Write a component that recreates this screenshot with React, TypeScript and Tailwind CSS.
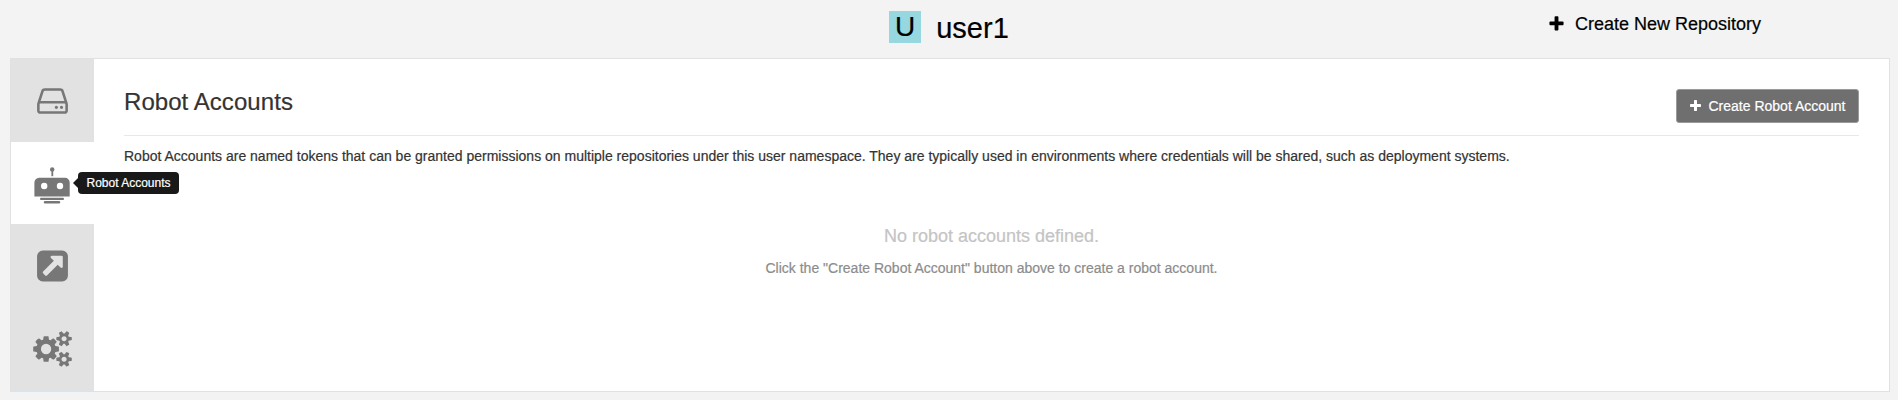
import type { ReactNode } from "react";

type GlyphProps = { width: number; className: string; d: string };

// Glyphs use font coordinates (y up, 1792 units per em).
function Glyph({ width, className, d }: GlyphProps) {
  return (
    <svg viewBox={`0 0 ${width} 1792`} className={className} fill="currentColor" aria-hidden="true">
      <path transform="translate(0 1536) scale(1 -1)" d={d} />
    </svg>
  );
}

const PLUS =
  "M1408 800v-192q0 -40 -28 -68t-68 -28h-416v-416q0 -40 -28 -68t-68 -28h-192q-40 0 -68 28t-28 68v416h-416q-40 0 -68 28t-28 68v192q0 40 28 68t68 28h416v416q0 40 28 68t68 28h192q40 0 68 -28t28 -68v-416h416q40 0 68 -28t28 -68z";
const DRIVE =
  "M1040 320q0 -33 -23.5 -56.5t-56.5 -23.5t-56.5 23.5t-23.5 56.5t23.5 56.5t56.5 23.5t56.5 -23.5t23.5 -56.5zM1296 320q0 -33 -23.5 -56.5t-56.5 -23.5t-56.5 23.5t-23.5 56.5t23.5 56.5t56.5 23.5t56.5 -23.5t23.5 -56.5zM1408 160v320q0 13 -9.5 22.5t-22.5 9.5h-1216q-13 0 -22.5 -9.5t-9.5 -22.5v-320q0 -13 9.5 -22.5t22.5 -9.5h1216q13 0 22.5 9.5t9.5 22.5zM178 640h1180l-157 482q-4 13 -16 21.5t-26 8.5h-782q-14 0 -26 -8.5t-16 -21.5zM1536 480v-320q0 -66 -47 -113t-113 -47h-1216q-66 0 -113 47t-47 113v320q0 25 16 75l197 606q17 53 63 86t101 33h782q55 0 101 -33t63 -86l197 -606q16 -50 16 -75z";
const EXTERNAL =
  "M1280 608v480q0 26 -19 45t-45 19h-480q-42 0 -59 -39q-17 -41 14 -70l144 -144l-534 -534q-19 -19 -19 -45t19 -45l102 -102q19 -19 45 -19t45 19l534 534l144 -144q18 -19 45 -19q12 0 25 5q39 17 39 59zM1536 1120v-960q0 -119 -84.5 -203.5t-203.5 -84.5h-960q-119 0 -203.5 84.5t-84.5 203.5v960q0 119 84.5 203.5t203.5 84.5h960q119 0 203.5 -84.5t84.5 -203.5z";
const COG_SMALL =
  "v-140q0 -16 -149 -31q-12 -27 -30 -52q51 -113 51 -138q0 -4 -4 -7q-122 -71 -124 -71q-8 0 -46 47t-52 68q-20 -2 -30 -2t-30 2q-14 -21 -52 -68t-46 -47q-2 0 -124 71q-4 3 -4 7q0 25 51 138q-18 25 -30 52q-149 15 -149 31v140q0 16 149 31q13 29 30 52q-51 113 -51 138q0 4 4 7q4 2 35 20t59 34t30 16q8 0 46 -46.5t52 -67.5q20 2 30 2t30 -2q51 71 92 112l6 2q4 0 124 -70q4 -3 4 -7q0 -25 -51 -138q17 -23 30 -52q149 -15 149 -31z";
const COGS =
  "M896 640q0 106 -75 181t-181 75t-181 -75t-75 -181t75 -181t181 -75t181 75t75 181zM1664 128q0 52 -38 90t-90 38t-90 -38t-38 -90q0 -53 37.5 -90.5t90.5 -37.5t90.5 37.5t37.5 90.5zM1664 1152q0 52 -38 90t-90 38t-90 -38t-38 -90q0 -53 37.5 -90.5t90.5 -37.5t90.5 37.5t37.5 90.5zM1280 731v-185q0 -10 -7 -19.5t-16 -10.5l-155 -24q-11 -35 -32 -76q34 -48 90 -115q7 -11 7 -20q0 -12 -7 -19q-23 -30 -82.5 -89.5t-78.5 -59.5q-11 0 -21 7l-115 90q-37 -19 -77 -31q-11 -108 -23 -155q-7 -24 -30 -24h-186q-11 0 -20 7.5t-10 17.5l-23 153q-34 10 -75 31l-118 -89q-7 -7 -20 -7q-11 0 -21 8q-144 133 -144 160q0 9 7 19q10 14 41 53t47 61q-23 44 -35 82l-152 24q-10 1 -17 9.5t-7 19.5v185q0 10 7 19.5t16 10.5l155 24q11 35 32 76q-34 48 -90 115q-7 11 -7 20q0 12 7 20q22 30 82 89t79 59q11 0 21 -7l115 -90q34 18 77 32q11 108 23 154q7 24 30 24h186q11 0 20 -7.5t10 -17.5l23 -153q34 -10 75 -31l118 89q8 7 20 7q11 0 21 -8q144 -133 144 -160q0 -8 -7 -19q-12 -16 -42 -54t-45 -60q23 -48 34 -82l152 -23q10 -2 17 -10.5t7 -19.5z" +
  "M1920 198" + COG_SMALL + "M1920 1222" + COG_SMALL;

function RobotIcon() {
  return (
    <svg viewBox="0 0 36 38" className="h-[38px] w-9" fill="currentColor" aria-hidden="true">
      <circle cx="18.2" cy="3.4" r="2.2" />
      <rect x="17.4" y="4" width="1.8" height="6.2" />
      <path
        fillRule="evenodd"
        d="M5 11.8h26a4.7 4.7 0 0 1 4.7 4.7v14H.4v-14A4.7 4.7 0 0 1 5 11.8zM10.2 16.8a3.2 3.2 0 1 0 0 6.4a3.2 3.2 0 0 0 0-6.4zM26 16.8a3.2 3.2 0 1 0 0 6.4a3.2 3.2 0 0 0 0-6.4z"
      />
      <rect x="6" y="31.7" width="24" height="2.3" rx="1.1" />
      <rect x="9.8" y="34.9" width="16.4" height="2.6" rx="1.2" />
    </svg>
  );
}

function Tab({ active, children }: { active?: boolean; children: ReactNode }) {
  return (
    <li
      className={
        active
          ? "relative flex h-[82px] items-center justify-center bg-white text-[#777]"
          : "flex flex-1 items-center justify-center border-r border-b border-[#dae4ea] bg-[#e2e2e2] text-[#777]"
      }
    >
      {children}
    </li>
  );
}

export default function App() {
  return (
    <div className="flex h-[400px] flex-col bg-[#f3f3f3] px-2 pb-2 font-['Liberation_Sans',Arial,sans-serif] text-sm text-[#333] [-webkit-text-stroke:0.2px]">
      <header className="grid h-[58px] grid-cols-3 text-black">
        <div />
        <div className="flex items-start justify-center pt-[11px]">
          <span className="flex size-8 items-center justify-center bg-[#96d7e0] text-[28px] leading-8">U</span>
          <h1 className="ml-[15px] pt-px text-[29px] leading-8">user1</h1>
        </div>
        <a className="flex items-start justify-end pt-3 pr-[129px] text-lg leading-6">
          <Glyph width={1408} className="mt-[3px] mr-[11px] h-[18px] w-[15px]" d={PLUS} />
          Create New Repository
        </a>
      </header>

      <main className="ml-0.5 flex h-[334px] border border-[#e1e1e1] bg-white">
        <ul className="flex w-[83px] shrink-0 flex-col">
          <Tab>
            <Glyph width={1536} className="mt-px h-9 w-[31px]" d={DRIVE} />
          </Tab>
          <Tab active>
            <span className="pt-1 pr-[2px]">
              <RobotIcon />
            </span>
            <span className="absolute top-[30px] left-[62px] z-10 flex items-center">
              <svg viewBox="0 0 5 10" className="h-2.5 w-[5px]" fill="#191919" aria-hidden="true">
                <path d="M5 0v10L0 5z" />
              </svg>
              <span className="flex h-[22px] w-[101px] items-center justify-center rounded bg-[#191919] text-xs whitespace-nowrap text-white">
                Robot Accounts
              </span>
            </span>
          </Tab>
          <Tab>
            <Glyph width={1536} className="mt-[2px] h-9 w-[31px]" d={EXTERNAL} />
          </Tab>
          <Tab>
            <Glyph width={1920} className="mt-px h-9 w-[39px] overflow-visible" d={COGS} />
          </Tab>
        </ul>

        <section className="flex-1 px-[30px] pt-[30px]">
          <div className="flex h-[47px] items-start justify-between border-b border-[#e8e8e8]">
            <h2 className="pt-px text-2xl leading-6 tracking-[0.06px]">Robot Accounts</h2>
            <button className="flex h-[34px] w-[183px] items-center justify-center rounded-[3px] border border-[#9a9a9a] bg-[#6f6f6f] text-sm whitespace-nowrap text-white">
              <Glyph width={1408} className="mr-2 h-[14px] w-[11px]" d={PLUS} />
              Create Robot Account
            </button>
          </div>
          <p className="pt-2.5 leading-5">
            Robot Accounts are named tokens that can be granted permissions on multiple repositories under this user
            namespace. They are typically used in environments where credentials will be shared, such as deployment
            systems.
          </p>
          <div className="mt-[58px] text-center">
            <div className="text-lg leading-6 text-[#c4c4c4]">No robot accounts defined.</div>
            <div className="mt-2.5 leading-5 text-[#8c8c8c]">
              Click the "Create Robot Account" button above to create a robot account.
            </div>
          </div>
        </section>
      </main>
    </div>
  );
}
